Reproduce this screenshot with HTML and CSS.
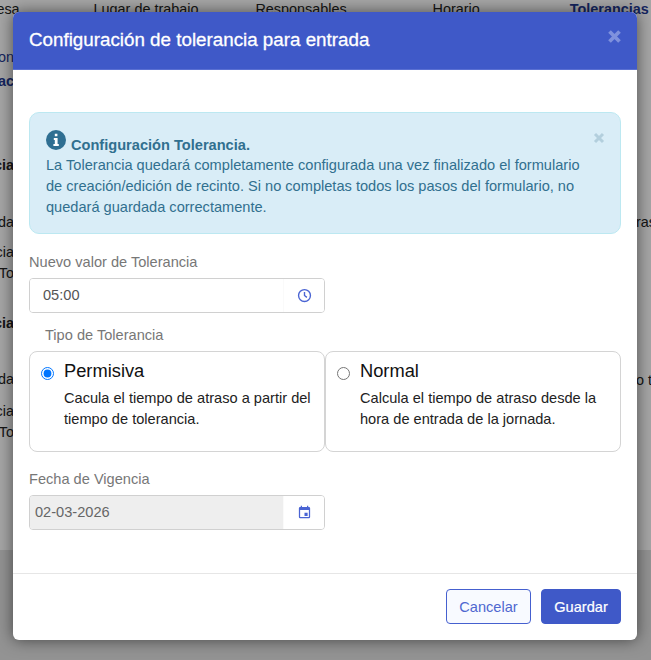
FILE: index.html
```html
<!DOCTYPE html>
<html lang="es">
<head>
    <meta charset="UTF-8">
    <meta name="viewport" content="width=device-width, initial-scale=1.0">
    <title>Configuración de tolerancia</title>
    <link rel="stylesheet" href="styles.css">
</head>
<body>
    <!-- page behind the modal, only its edges show -->
    <div class="page">
        <div class="tabs">
            <span class="tab tab-empresa">Empresa</span>
            <span class="tab tab-lugar">Lugar de trabajo</span>
            <span class="tab tab-resp">Responsables</span>
            <span class="tab tab-horario">Horario</span>
            <span class="tab tab-active">Tolerancias</span>
        </div>
        <div class="page-body">
            <div class="side side-left">
                <span class="scrap scrap-on">Configuracion</span>
                <span class="scrap scrap-ac">Informac</span>
                <span class="scrap scrap-t1">Tolerancia</span>
                <span class="scrap scrap-a1">Tolerancia de entrada</span>
                <span class="scrap scrap-c1">Permisiva de tolerancia</span>
                <span class="scrap scrap-to1">Valor To</span>
                <span class="scrap scrap-t2">Tolerancia</span>
                <span class="scrap scrap-a2">Tolerancia de salida</span>
                <span class="scrap scrap-c2">Permisiva de tolerancia</span>
                <span class="scrap scrap-to2">Valor To</span>
            </div>
            <div class="side side-right">
                <span class="scrap scrap-ras">rasos</span>
                <span class="scrap scrap-ot">o t</span>
            </div>
        </div>
    </div>
    <div class="page-foot"></div>
    <div class="backdrop"></div>

    <div class="modal">
        <div class="modal-header">
            <h2>Configuración de tolerancia para entrada</h2>
            <svg class="close-icon header-close" viewBox="0 0 12 12" width="15" height="15"><path d="M2 2l8 8M10 2l-8 8"/></svg>
        </div>
        <div class="modal-body">
            <div class="alert">
                <svg class="alert-close close-icon" viewBox="0 0 12 12" width="12" height="12"><path d="M2 2l8 8M10 2l-8 8"/></svg>
                <div class="alert-title">
                    <svg class="info-icon" viewBox="0 0 20 20" width="20" height="20">
                        <circle cx="10" cy="10" r="10" fill="#2f6f92"/>
                        <path d="M8.800 3.800h2.600v2.500H8.800zM7.800 8h3.800v6h1.200v2H7.400v-2h1.400v-4h-1z" fill="#fff"/>
                    </svg>
                    <strong>Configuración Tolerancia.</strong>
                </div>
                <p>La Tolerancia quedará completamente configurada una vez finalizado el formulario de creación/edición de recinto. Si no completas todos los pasos del formulario, no quedará guardada correctamente.</p>
            </div>

            <label class="field-label" for="tol-value">Nuevo valor de Tolerancia</label>
            <div class="input-group">
                <input class="time-input" id="tol-value" type="text" value="05:00">
                <span class="addon">
                    <svg viewBox="0 0 24 24" width="15" height="15" fill="none" stroke="#4a64d3" stroke-width="2.200"><circle cx="12" cy="12" r="9.500"/><path d="M12 6.500V12l3.800 3"/></svg>
                </span>
            </div>

            <div class="type-label">Tipo de Tolerancia</div>
            <div class="type-row">
                <label class="type-card">
                    <input type="radio" name="tipo" checked>
                    <span>
                        <span class="type-name">Permisiva</span>
                        <span class="type-desc">Cacula el tiempo de atraso a partir del tiempo de tolerancia.</span>
                    </span>
                </label>
                <label class="type-card">
                    <input type="radio" name="tipo">
                    <span>
                        <span class="type-name">Normal</span>
                        <span class="type-desc">Calcula el tiempo de atraso desde la hora de entrada de la jornada.</span>
                    </span>
                </label>
            </div>

            <label class="field-label date-label" for="tol-date">Fecha de Vigencia</label>
            <div class="input-group">
                <input class="date-input" id="tol-date" type="text" value="02-03-2026" disabled>
                <span class="addon">
                    <svg viewBox="0 0 24 24" width="15" height="15" fill="#4a64d3"><path d="M19 3h-1V1h-2v2H8V1H6v2H5a2 2 0 0 0-2 2v14a2 2 0 0 0 2 2h14a2 2 0 0 0 2-2V5a2 2 0 0 0-2-2zm0 16H5V8h14v11zM12 12.500h5v5h-5z"/></svg>
                </span>
            </div>
        </div>
        <div class="modal-footer">
            <button class="btn btn-outline">Cancelar</button>
            <button class="btn btn-primary">Guardar</button>
        </div>
    </div>
</body>
</html>
```

FILE: styles.css
```css
body {
    font-family: "Liberation Sans", Arial, sans-serif;
    margin: 0;
    width: 651px;
    height: 660px;
    overflow: hidden;
    position: relative;
    background: #fff;
    color: #222;
}

/* page behind the modal */
.page {
    height: 550px;
    overflow: hidden;
    background: #fff;
}

.page-foot {
    height: 110px;
    background: #e2e2e2;
}

.tabs {
    display: flex;
    height: 36px;
    font-size: 14.4px;
    line-height: 18px;
}

.tab { white-space: nowrap; }
.tab-empresa { margin-left: -38px; }
.tab-lugar { margin-left: 74px; }
.tab-resp { margin-left: 57px; }
.tab-horario { margin-left: 86px; }
.tab-active { margin-left: 90px; font-weight: bold; color: #1f3a93; }

.page-body {
    display: flex;
    justify-content: space-between;
}

.side {
    display: flex;
    flex-direction: column;
    font-size: 14.4px;
    line-height: 18px;
    white-space: nowrap;
}

.side-left {
    width: 14px;
    overflow: hidden;
    align-items: flex-end;
}

.side-right { width: 15px; }

.scrap-on { margin-top: 12px; color: #1f3a93; }
.scrap-ac { margin-top: 6px; font-weight: bold; color: #1f3a93; }
.scrap-t1 { margin-top: 66px; font-weight: bold; }
.scrap-a1 { margin-top: 39px; }
.scrap-c1 { margin-top: 12px; }
.scrap-to1 { margin-top: 3px; }
.scrap-t2 { margin-top: 32px; font-weight: bold; }
.scrap-a2 { margin-top: 38px; }
.scrap-c2 { margin-top: 14px; }
.scrap-to2 { margin-top: 3px; }
.scrap-ras { margin-top: 177px; }
.scrap-ot { margin-top: 140px; }

.backdrop {
    position: absolute;
    inset: 0;
    background: rgba(0, 0, 0, 0.35);
}

/* modal */
.modal {
    position: absolute;
    top: 12px;
    left: 13px;
    width: 624px;
    height: 628px;
    display: flex;
    flex-direction: column;
    background: #fff;
    border-radius: 6px;
    box-shadow: 0 0 16px rgba(0, 0, 0, 0.55);
    overflow: hidden;
}

.modal-header {
    height: 58px;
    flex-shrink: 0;
    box-sizing: border-box;
    padding: 0 15px 2px 16px;
    display: flex;
    justify-content: space-between;
    align-items: center;
    background: #3f59c8;
    border-bottom: 1px solid #5a70d2;
}

.modal-header h2 {
    margin: 0;
    font-size: 18.8px;
    font-weight: normal;
    color: #fff;
    -webkit-text-stroke: 0.3px #fff;
}

.close-icon {
    fill: none;
    stroke: #7f91dd;
    stroke-width: 3;
}

.header-close { margin-bottom: 6px; }

.modal-body {
    flex: 1;
    padding: 42px 16px 0;
}

.alert {
    position: relative;
    box-sizing: border-box;
    height: 122px;
    padding: 17px 40px 0 16px;
    background: #d9edf7;
    border: 1px solid #bce8f1;
    border-radius: 10px;
    color: #31708f;
    font-size: 14.6px;
    line-height: 21px;
}

.alert p { margin: 0; }

.alert-close {
    position: absolute;
    top: 19px;
    right: 15px;
    stroke: #b3cfdd;
}

.alert-title {
    display: flex;
    align-items: flex-start;
    gap: 5px;
    height: 25px;
}

.alert-title strong { margin-top: 7px; line-height: 17px; }

.info-icon { flex-shrink: 0; }

.field-label {
    display: block;
    margin: 19px 0 7px;
    font-size: 14.6px;
    line-height: 18px;
    color: #777;
}

.date-label { margin-top: 18px; }

.input-group {
    display: flex;
    width: 296px;
    height: 35px;
    box-sizing: border-box;
    border: 1px solid #d0d0d0;
    border-radius: 4px;
    overflow: hidden;
}

.input-group input {
    flex: 1;
    min-width: 0;
    border: none;
    outline: none;
    font: 14.6px "Liberation Sans", Arial, sans-serif;
    color: #555;
    background: #fff;
}

.time-input { padding: 0 13px 2px; }

.date-input {
    padding: 0 5px 2px;
}

.input-group .date-input { background: #eee; color: #666; }

.addon {
    width: 40px;
    display: flex;
    align-items: center;
    justify-content: center;
    background: #fff;
    border-left: 1px solid #fafafa;
}

.type-label {
    margin: 14px 0 7px 16px;
    font-size: 14.6px;
    line-height: 17px;
    color: #777;
}

.type-row { display: flex; }

.type-card {
    box-sizing: border-box;
    width: 296px;
    height: 101px;
    display: flex;
    gap: 10px;
    padding: 7px 11px;
    border: 1px solid #d4d4d4;
    border-radius: 8px;
}

.type-card input {
    align-self: flex-start;
    margin: 8px 0 0;
    flex-shrink: 0;
}

.type-name {
    display: block;
    font-size: 18.3px;
    line-height: 24px;
    color: #111;
}

.type-desc {
    display: block;
    margin-top: 5px;
    font-size: 14.6px;
    line-height: 21px;
    color: #222;
}

.modal-footer {
    height: 67px;
    flex-shrink: 0;
    box-sizing: border-box;
    border-top: 1px solid #e6e6e6;
    padding: 15px 16px 0;
    display: flex;
    justify-content: flex-end;
    align-items: flex-start;
    gap: 10px;
}

.btn {
    height: 35px;
    border-radius: 4px;
    font: 14.6px "Liberation Sans", Arial, sans-serif;
}

.btn-outline {
    width: 85px;
    background: #f8faff;
    border: 1px solid #4560cf;
    color: #4f68d0;
}

.btn-primary {
    width: 80px;
    background: #3f59c8;
    border: 1px solid #3f59c8;
    color: #fff;
    -webkit-text-stroke: 0.2px #fff;
}
```
